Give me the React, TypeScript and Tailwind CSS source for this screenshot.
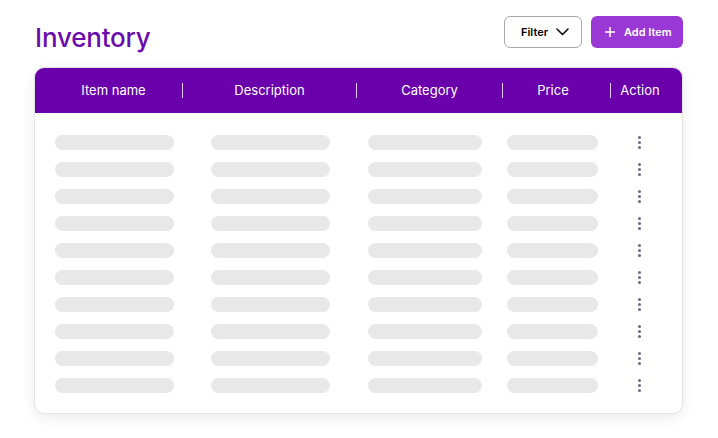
import React from 'react';

const rows = Array.from({ length: 10 }, (_, i) => i);

const columns = [
  { label: 'Item name', className: 'w-[147px] pl-[10px]' },
  { label: 'Description', className: 'w-[173px]' },
  { label: 'Category', className: 'w-[145px]' },
  { label: 'Price', className: 'w-[107px] pr-[7px]' },
  { label: 'Action', className: 'flex-1 pr-[13px]' },
];

const Bar: React.FC<{ className: string }> = ({ className }) => (
  <div className={`h-[15px] rounded-full bg-[#e8e8e8] ${className}`} />
);

const App: React.FC = () => {
  return (
    <div className="w-[718px] h-[438px] bg-white font-['Inter','Liberation_Sans',sans-serif] px-[34px] pt-[16px] pr-[35px]">
      {/* Top bar: title + actions */}
      <div className="flex items-start justify-between">
        <h1 className="mt-[6px] pl-[1px] text-[26px] leading-[32px] font-medium text-[#6a0dad] tracking-[-0.2px]">Inventory</h1>
        <div className="flex items-center gap-[9px]">
          <button className="h-[32px] w-[78px] flex items-center pl-[16px] gap-[8px] rounded-[6px] border border-[#a8a8a8] bg-white text-[11px] font-semibold text-black">
            Filter
            <svg width="13" height="8" viewBox="0 0 13 8" fill="none">
              <path d="M1 1l5.5 5.5L12 1" stroke="#111" strokeWidth="1.6" strokeLinecap="round" strokeLinejoin="round" />
            </svg>
          </button>
          <button className="h-[32px] w-[92px] flex items-center pl-[14px] gap-[9px] rounded-[6px] bg-[#9a38d6] text-[11px] font-semibold text-white">
            <svg width="10" height="10" viewBox="0 0 10 10" fill="none">
              <path d="M5 0.5v9M0.5 5h9" stroke="#fff" strokeWidth="1.6" strokeLinecap="round" />
            </svg>
            Add Item
          </button>
        </div>
      </div>

      {/* Table card */}
      <div className="mt-[13px] rounded-[10px] border border-[#e3e3e3] bg-white shadow-[0_4px_14px_rgba(0,0,0,0.08)] overflow-hidden">
        <div className="h-[45px] bg-[#6900ab] flex items-center text-white text-[13px] font-normal">
          {columns.map((c, i) => (
            <React.Fragment key={c.label}>
              {i > 0 && <div className="w-px h-[15px] bg-white/80" />}
              <div className={`text-center ${c.className}`}>{c.label}</div>
            </React.Fragment>
          ))}
        </div>
        <div className="pt-[22px] pb-[20px] flex flex-col gap-[12px]">
          {rows.map((r) => (
            <div key={r} className="flex items-center">
              <Bar className="ml-[20px] w-[119px]" />
              <Bar className="ml-[37px] w-[119px]" />
              <Bar className="ml-[38px] w-[114px]" />
              <Bar className="ml-[25px] w-[91px]" />
              <div className="ml-[40px] flex flex-col gap-[2px]">
                <span className="w-[3px] h-[3px] rounded-full bg-[#676d82]" />
                <span className="w-[3px] h-[3px] rounded-full bg-[#676d82]" />
                <span className="w-[3px] h-[3px] rounded-full bg-[#676d82]" />
              </div>
            </div>
          ))}
        </div>
      </div>
    </div>
  );
};

export default App;
